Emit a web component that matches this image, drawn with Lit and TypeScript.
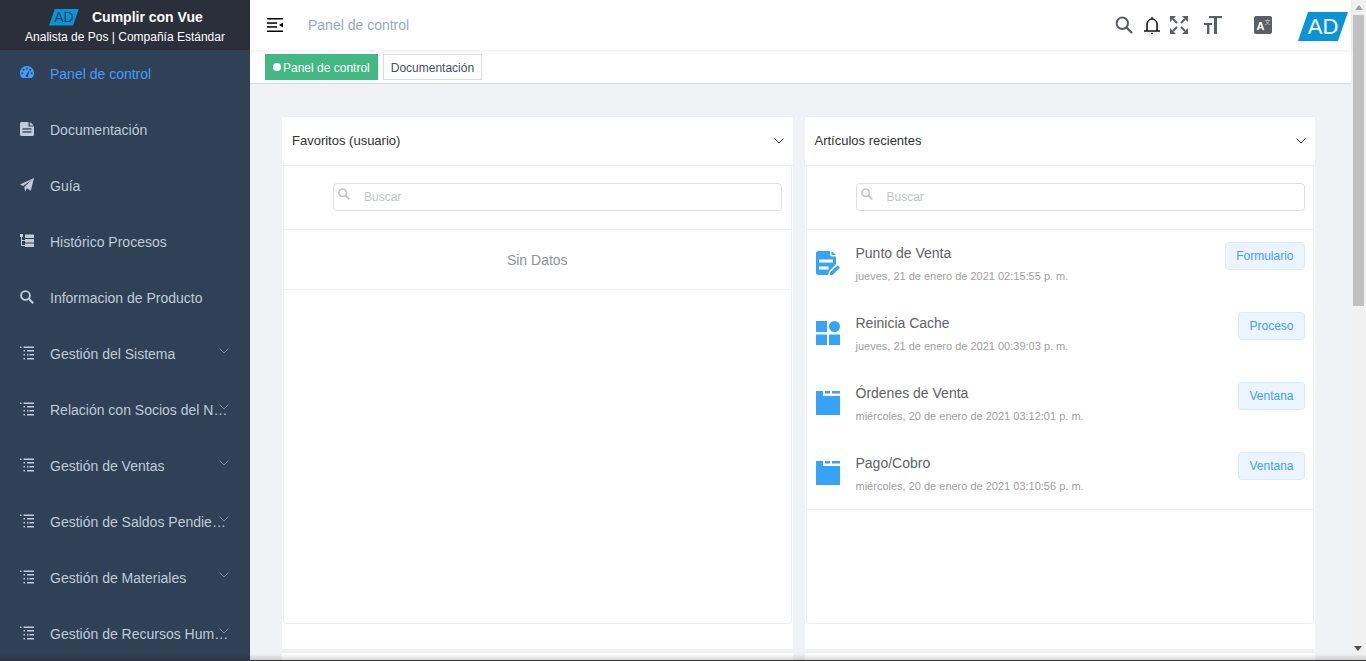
import { LitElement, html, css, svg } from "lit";
import { customElement } from "lit/decorators.js";

const chevron = svg`<path d="M.5 .5 5 5 9.500 .5" fill="none" stroke="currentColor" stroke-width="1"/>`;

const sideIcons: Record<string, unknown> = {
  gauge: svg`<path fill="currentColor" d="M7 0C3.100 0 0 3.100 0 7c0 1.600.5 3 1.400 4.200l.6.8h10l.6-.8C13.500 10 14 8.600 14 7c0-3.900-3.100-7-7-7z"/>
    <g fill="#304156"><circle cx="2.300" cy="7.200" r="1"/><circle cx="3.700" cy="3.800" r="1"/><circle cx="7" cy="2.500" r="1"/><circle cx="10.300" cy="3.800" r="1"/><circle cx="11.700" cy="7.200" r="1"/><path d="M6 9.500 8.700 4.800 9.500 5.200 7.800 10.200z"/><circle cx="7" cy="9.800" r="1.300"/></g>`,
  doc: svg`<path fill="currentColor" d="M1.500 0H8.500V4.500H14V12.500A1.500 1.500 0 0 1 12.500 14H1.500A1.500 1.500 0 0 1 0 12.500V1.500A1.500 1.500 0 0 1 1.500 0ZM9.800 0 14 3.500H9.800Z"/>
    <g fill="#304156"><rect x="2.500" y="6.300" width="9" height="1.300"/><rect x="2.500" y="9.300" width="9" height="1.300"/></g>`,
  plane: svg`<path fill="currentColor" d="M14 0 10.800 12.700 6.800 10.300 5.200 13.800 4.300 9 12 1.800 2.900 8.100 0 6.500Z"/>`,
  tree: svg`<g fill="currentColor"><rect x="0" y="0" width="3" height="3"/><rect x="1" y="3" width="1" height="9"/><rect x="1" y="6" width="4" height="1"/><rect x="1" y="11" width="4" height="1"/><rect x="5" y="0.500" width="9" height="3.500"/><rect x="5" y="5" width="9" height="3.500"/><rect x="5" y="9.500" width="9" height="3.500"/></g>`,
  search: svg`<circle cx="5.500" cy="5.500" r="4.400" fill="none" stroke="currentColor" stroke-width="1.900"/><path d="M8.800 8.800 13.200 13.200" stroke="currentColor" stroke-width="2.200" fill="none"/>`,
  list: svg`<g fill="currentColor"><rect x="0" y="0.500" width="1.500" height="1.500"/><rect x="3.500" y="0.500" width="10.500" height="1.500"/><rect x="3.500" y="4" width="1.500" height="1.500"/><rect x="7" y="4" width="7" height="1.500"/><rect x="3.500" y="8" width="1.500" height="1.500"/><rect x="7" y="8" width="1.500" height="1.500"/><rect x="9.500" y="8" width="4.500" height="1.500"/><rect x="3.500" y="12" width="1.500" height="1.500"/><rect x="7" y="12" width="7" height="1.500"/></g>`,
};

const menu = [
  { icon: "gauge", label: "Panel de control", active: true },
  { icon: "doc", label: "Documentación" },
  { icon: "plane", label: "Guía" },
  { icon: "tree", label: "Histórico Procesos" },
  { icon: "search", label: "Informacion de Producto" },
  { icon: "list", label: "Gestión del Sistema", sub: true },
  { icon: "list", label: "Relación con Socios del Negocio", sub: true },
  { icon: "list", label: "Gestión de Ventas", sub: true },
  { icon: "list", label: "Gestión de Saldos Pendientes", sub: true },
  { icon: "list", label: "Gestión de Materiales", sub: true },
  { icon: "list", label: "Gestión de Recursos Humanos", sub: true },
];

const rowIcons: Record<string, unknown> = {
  form: svg`<path fill="#36a3f7" d="M2.500 0H14V3.500A2 2 0 0 0 16 5.500H20V13L13 20.500 12 24H2.500A2.500 2.500 0 0 1 0 21.500V2.500A2.500 2.500 0 0 1 2.500 0ZM15.500 0 20 4H15.500Z"/>
    <g fill="#fff"><rect x="3" y="8.500" width="14" height="3"/><rect x="3" y="15.500" width="9.500" height="3"/></g>
    <path fill="#36a3f7" d="M21.500 14.500 24 16.500 16.500 24H14V21.500Z"/>`,
  grid: svg`<g fill="#36a3f7"><rect x="0" y="0" width="11" height="11"/><circle cx="18.500" cy="5.500" r="5.500"/><rect x="0" y="13.500" width="11" height="10.500"/><rect x="13" y="13.500" width="11" height="10.500"/></g>`,
  win: svg`<rect x="0" y="0" width="24" height="24" fill="#36a3f7"/><rect x="7" y="0" width="17" height="5" fill="#fff"/><g fill="#36a3f7"><rect x="9" y="0" width="5" height="2.500"/><rect x="16" y="0" width="8" height="2.500"/></g>`,
};

const rows = [
  { icon: "form", title: "Punto de Venta", date: "jueves, 21 de enero de 2021 02:15:55 p. m.", tag: "Formulario" },
  { icon: "grid", title: "Reinicia Cache", date: "jueves, 21 de enero de 2021 00:39:03 p. m.", tag: "Proceso" },
  { icon: "win", title: "Órdenes de Venta", date: "miércoles, 20 de enero de 2021 03:12:01 p. m.", tag: "Ventana" },
  { icon: "win", title: "Pago/Cobro", date: "miércoles, 20 de enero de 2021 03:10:56 p. m.", tag: "Ventana" },
];

const font = css`"Liberation Sans", Arial, sans-serif`;

@customElement("app-root")
export class AppRoot extends LitElement {
  static styles = css`
    :host { display: block; height: 661px; overflow: hidden; position: relative; font-family: ${font}; background: #f0f2f5; }
    * { box-sizing: border-box; }
    .page { display: flex; height: 661px; }
    .side { width: 250px; flex: none; background: #304156; overflow: hidden; }
    .logo { position: relative; z-index: 1; height: 50px; background: #2b2f3a; color: #fff; display: flex; flex-direction: column; align-items: center; }
    .logo-top { display: flex; align-items: center; height: 28px; padding-top: 6px; width: 100%; padding-left: 49px; }
    .mark { width: 30px; height: 17px; background: #0a94d8; clip-path: polygon(20% 0, 100% 0, 80% 100%, 0 100%); color: #1f3f66; font-size: 14px; line-height: 17px; text-align: center; }
    .logo-name { font-size: 14px; font-weight: 700; margin-left: 13px; }
    .logo-sub { font-size: 12px; line-height: 16px; margin-top: 1px; }
    .menu { margin-top: -4px; }
    .item { position: relative; height: 56px; display: flex; align-items: center; padding-left: 20px; color: #bfcbd9; font-size: 14px; }
    .item.on { color: #409eff; }
    .item svg.ic { width: 14px; height: 14px; flex: none; margin-right: 16px; margin-top: -3px; }
    .item .t { width: 180px; white-space: nowrap; overflow: hidden; text-overflow: ellipsis; }
    .item svg.ch { position: absolute; left: 219px; top: 22px; width: 10px; height: 6px; color: #7f8b98; }

    .main { flex: 1; min-width: 0; display: flex; flex-direction: column; }
    .head { position: relative; z-index: 2; height: 50px; flex: none; background: #fff; box-shadow: 0 1px 4px rgba(0, 21, 41, .08); display: flex; align-items: center; padding-left: 17px; }
    .burger { width: 16px; height: 14px; flex: none; margin-right: 25px; }
    .crumb { font-size: 14px; color: #97a8be; }
    .tools { margin-left: auto; display: flex; align-items: center; }
    .tools svg { display: block; flex: none; }
    .t-search { width: 18px; height: 18px; margin-right: 11px; }
    .t-bell { width: 16px; height: 18px; margin-right: 10px; }
    .t-full { width: 18px; height: 18px; margin-right: 16px; }
    .t-size { width: 18px; height: 18px; margin-right: 32px; }
    .t-lang { width: 18px; height: 18px; margin-right: 26px; }
    .avatar { width: 50px; height: 29px; margin: 3px 3px 0 0; background: #0a94d8; clip-path: polygon(20% 0, 100% 0, 80% 100%, 0 100%); color: #fff; font-size: 22px; line-height: 30px; text-align: center; }
    .tabs { height: 34px; flex: none; background: #fff; border-bottom: 1px solid #d8dce5; display: flex; align-items: flex-start; padding: 4px 0 0 15px; gap: 5px; font-size: 12px; }
    .tab { height: 26px; border: 1px solid #d8dce5; color: #495060; padding: 2px 7px 0; display: flex; align-items: center; background: #fff; }
    .tab.on { background: #42b983; border-color: #42b983; color: #fff; }
    .dot { width: 8px; height: 8px; border-radius: 50%; background: #fff; margin: -2px 2px 0 0; }
    .body { flex: 1; min-height: 0; overflow: hidden; padding: 32px 36px 0 32px; display: grid; grid-template-columns: 1fr 1fr; column-gap: 12px; align-items: start; }
    .col { border-top: 1px solid #ebeef5; }
    .chead { height: 49px; background: #fff; display: flex; align-items: center; justify-content: space-between; padding: 0 9px 1px 10px; font-size: 13px; color: #303133; border-bottom: 1px solid #ebeef5; }
    .chead svg { width: 10px; height: 6px; color: #303133; }
    .wrap { background: #fff; padding: 0 1px 25px; border-bottom: 1px solid #ebeef5; }
    .card { height: 458px; border: 1px solid #ebeef5; border-top: 0; border-radius: 0 0 4px 4px; }
    .sbox { height: 64px; border-bottom: 1px solid #ebeef5; padding: 17px 8.500px 0 49px; }
    .input { position: relative; height: 28px; border: 1px solid #dcdfe6; border-radius: 4px; padding-left: 30px; font-size: 12px; line-height: 26px; color: #c0c4cc; }
    .input svg { position: absolute; left: 4px; top: 4px; width: 12px; height: 12px; color: #c0c4cc; }
    .empty { height: 60px; border-bottom: 1px solid #ebeef5; text-align: center; line-height: 61px; font-size: 14px; color: #909399; }
    .rows { height: 280px; border-bottom: 1px solid #ebeef5; }
    .row { height: 70px; display: flex; align-items: flex-start; padding: 0 8.500px 0 9px; }
    .row svg { width: 24px; height: 24px; flex: none; margin: 21px 16px 0 0; }
    .txt { flex: 1; min-width: 0; padding-top: 13px; }
    .ttl { font-size: 14px; line-height: 20px; color: #606266; }
    .date { font-size: 11px; line-height: 20px; margin-top: 3px; color: #a0a0a0; }
    .tag { height: 28px; margin-top: 12px; padding: 0 10px; line-height: 26px; font-size: 12px; color: #409eff; background: #ecf5ff; border: 1px solid #d9ecff; border-radius: 4px; }
    .next { margin-top: 2px; background: #fff; border-top: 1px solid #ebeef5; height: 40px; }

    .bar { width: 15px; flex: none; background: #f1f1f1; padding-left: 2px; display: flex; flex-direction: column; }
    .up { width: 0; height: 0; margin: 5px 0 0 2px; border: 4px solid transparent; border-top: 0; border-bottom: 5px solid #a3a3a3; }
    .thumb { width: 11px; height: 291px; margin-top: 5px; background: #c1c1c1; }
    .down { width: 0; height: 0; margin: 340px 0 0 1px; border: 4px solid transparent; border-bottom: 0; border-top: 5px solid #505050; }
    .fade { position: absolute; left: 0; right: 0; bottom: 0; height: 7px; z-index: 5; pointer-events: none; background: linear-gradient(to bottom, rgba(0,0,0,0), rgba(0,0,0,.14) 80%, #333 86%, #333); }
  `;

  private search() {
    return html`<div class="sbox"><div class="input">
      <svg viewBox="0 0 14 14">${sideIcons.search}</svg>Buscar</div></div>`;
  }

  render() {
    return html`<div class="page">
      <aside class="side">
        <div class="logo">
          <div class="logo-top"><div class="mark">AD</div><div class="logo-name">Cumplir con Vue</div></div>
          <div class="logo-sub">Analista de Pos | Compañía Estándar</div>
        </div>
        <div class="menu">
          ${menu.map((m) => html`<div class="item ${m.active ? "on" : ""}">
            <svg class="ic" viewBox="0 0 14 14">${sideIcons[m.icon]}</svg>
            <span class="t">${m.label}</span>
            ${m.sub ? html`<svg class="ch" viewBox="0 0 10 6">${chevron}</svg>` : ""}
          </div>`)}
        </div>
      </aside>
      <div class="main">
        <header class="head">
          <svg class="burger" viewBox="0 0 16 14"><g fill="#000"><rect width="16" height="1.500"/><rect y="4.300" width="10" height="1.500"/><rect y="8.200" width="10" height="1.500"/><rect y="12.500" width="16" height="1.500"/><path d="M12 7 16 4.500V9.500Z"/></g></svg>
          <span class="crumb">Panel de control</span>
          <div class="tools">
            <svg class="t-search" viewBox="0 0 18 18"><circle cx="7.300" cy="7.300" r="5.700" fill="none" stroke="#5a5e66" stroke-width="2"/><path d="M11.500 11.500 17 17" stroke="#5a5e66" stroke-width="2.400"/></svg>
            <svg class="t-bell" viewBox="0 0 16 18"><path d="M2.500 15V8A5 5 0 0 1 12.500 8V15" fill="none" stroke="#e8892b" stroke-width="1"/><path d="M3.500 15V8A5 5 0 0 1 13.500 8V15" fill="none" stroke="#2b7fd8" stroke-width="1"/><path d="M3 15V8A5 5 0 0 1 13 8V15" fill="none" stroke="#000" stroke-width="1"/><path d="M0 15H16" stroke="#000" stroke-width="1.400"/><path d="M8 1V3M7 17.400H9" stroke="#000" stroke-width="1.200"/></svg>
            <svg class="t-full" viewBox="0 0 18 18"><g fill="#5a5e66"><path d="M0 0H6L0 6ZM18 0V6L12 0ZM0 18V12L6 18ZM18 18H12L18 12Z"/></g><g stroke="#5a5e66" stroke-width="2"><path d="M3 3 7 7M15 3 11 7M3 15 7 11M15 15 11 11"/></g></svg>
            <svg class="t-size" viewBox="0 0 18 18"><g fill="#5a5e66"><rect x="5" y="0" width="13" height="2.200"/><rect x="10" y="0" width="3" height="18"/><rect x="0" y="7" width="8" height="2"/><rect x="3" y="7" width="2.400" height="11"/></g></svg>
            <svg class="t-lang" viewBox="0 0 18 18"><rect width="18" height="18" rx="2" fill="#5a5e66"/><text x="2.500" y="14" font-family="Liberation Sans" font-weight="700" font-size="11" fill="#fff">A</text><text x="10.500" y="8" font-family="Noto Sans CJK SC" font-size="6" fill="#d0d0d0">文</text></svg>
            <div class="avatar">AD</div>
          </div>
        </header>
        <nav class="tabs">
          <div class="tab on"><span class="dot"></span>Panel de control</div>
          <div class="tab">Documentación</div>
        </nav>
        <div class="body">
          <section class="col">
            <div class="chead"><span>Favoritos (usuario)</span><svg viewBox="0 0 10 6">${chevron}</svg></div>
            <div class="wrap"><div class="card">
              ${this.search()}
              <div class="empty">Sin Datos</div>
            </div></div>
            <div class="next"></div>
          </section>
          <section class="col">
            <div class="chead"><span>Artículos recientes</span><svg viewBox="0 0 10 6">${chevron}</svg></div>
            <div class="wrap"><div class="card">
              ${this.search()}
              <div class="rows">
                ${rows.map((r) => html`<div class="row">
                  <svg viewBox="0 0 24 24">${rowIcons[r.icon]}</svg>
                  <div class="txt"><div class="ttl">${r.title}</div><div class="date">${r.date}</div></div>
                  <div class="tag">${r.tag}</div>
                </div>`)}
              </div>
            </div></div>
            <div class="next"></div>
          </section>
        </div>
      </div>
      <div class="bar"><div class="up"></div><div class="thumb"></div><div class="down"></div></div>
    </div>
    <div class="fade"></div>`;
  }
}
